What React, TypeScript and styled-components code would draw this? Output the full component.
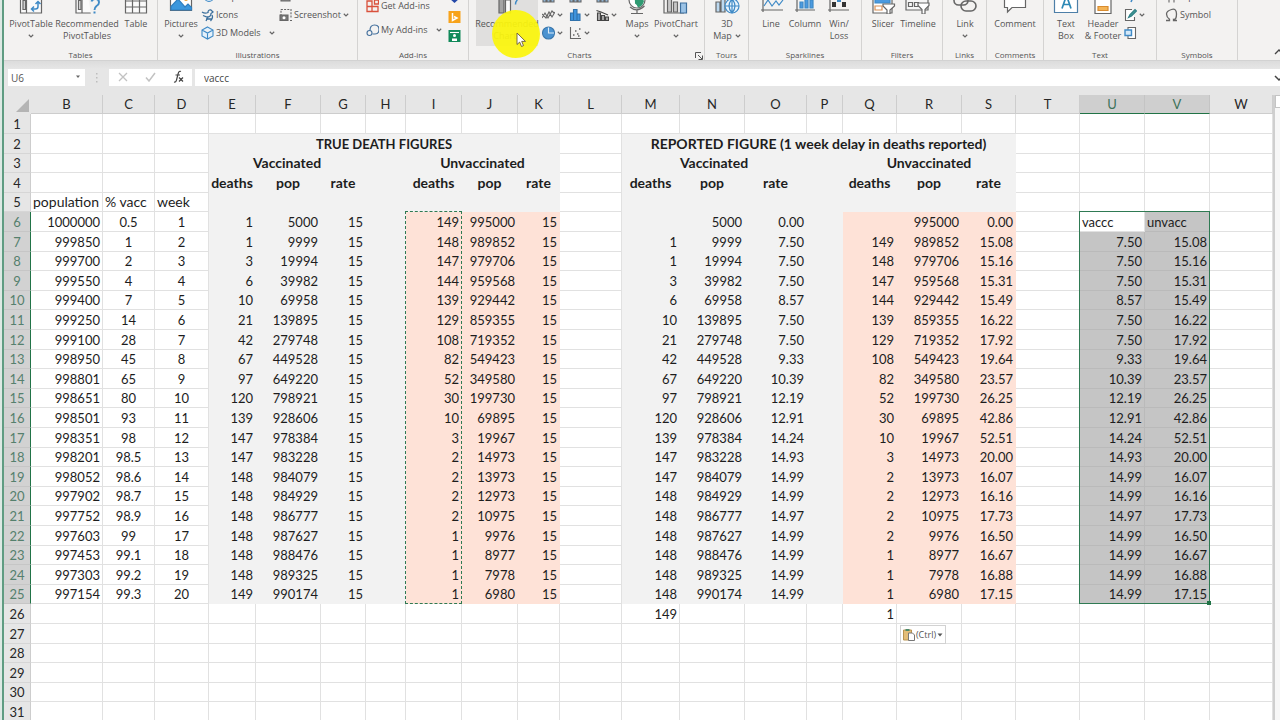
import React from "react";
import styled, { createGlobalStyle, css } from "styled-components";

const UI_FONT = '"Open Sans", "Noto Sans", sans-serif';
const CELL_FONT = 'Lato, "Open Sans", sans-serif';
const GREEN = "#217346";
const GRID = "#e1e1e1";

const GlobalStyle = createGlobalStyle`
  * { box-sizing: border-box; }
  body { margin: 0; background: #e6e6e6; }
  button, input { font: inherit; color: inherit; margin: 0; padding: 0; border: 0; background: none; }
`;

const Window = styled.div`
  height: 100vh;
  overflow: hidden;
  display: flex;
  flex-direction: column;
  background: #e6e6e6;
  border-left: 2px solid #dde9e4;
  font-family: ${UI_FONT};
  font-size: 10px;
  line-height: 12px;
  color: #555;
`;

const Frame = styled.div`
  flex: 1;
  min-height: 0;
  display: flex;
  flex-direction: column;
  border-left: 2px solid #5f9c82;
`;

/* ---------- ribbon ---------- */

const Ribbon = styled.header`
  position: relative;
  flex: none;
  height: 61px;
  display: flex;
  align-items: flex-end;
  overflow: hidden;
  background: #f3f2f1;
  border-bottom: 1px solid #d2d2d2;
  font-size: 9px;
`;

const Group = styled.section<{ $w: number }>`
  flex: none;
  width: ${(p) => p.$w}px;
  height: 84px;
  display: flex;
  flex-direction: column;
  border-right: 1px solid #d4d3d2;
`;

const GroupBody = styled.div<{ $pad?: number }>`
  flex: 1;
  display: flex;
  align-items: flex-start;
  padding-left: ${(p) => p.$pad ?? 0}px;
`;

const GroupLabel = styled.div<{ $launcher?: boolean }>`
  position: relative;
  height: 12px;
  font-size: 8px;
  line-height: 14px;
  text-align: center;
  white-space: nowrap;
  padding-right: ${(p) => (p.$launcher ? 14 : 0)}px;
`;

const Launcher = styled.button`
  position: absolute;
  right: 1px;
  top: 2px;
  width: 8px;
  height: 8px;
  display: block;
`;

const BigButton = styled.button<{ $w: number; $active?: boolean }>`
  flex: none;
  width: ${(p) => p.$w}px;
  height: 70px;
  padding-top: 6px;
  display: flex;
  flex-direction: column;
  align-items: center;
  background: ${(p) => (p.$active ? "#e0dfde" : "transparent")};
  white-space: nowrap;
`;

const BigLabel = styled.span`
  margin-top: 4px;
  display: flex;
  flex-direction: column;
  align-items: center;
`;

const LabelLine = styled.span`
  height: 12px;
  display: flex;
  align-items: center;
  gap: 3px;
`;

const Stack = styled.div<{ $w: number; $top?: number; $row?: number }>`
  flex: none;
  width: ${(p) => p.$w}px;
  padding-top: ${(p) => p.$top ?? 12}px;
  display: grid;
  grid-auto-rows: ${(p) => p.$row ?? 18}px;
`;

const SmallButton = styled.button<{ $gap?: number }>`
  display: flex;
  align-items: center;
  gap: ${(p) => p.$gap ?? 2}px;
  white-space: nowrap;
  text-align: left;
`;

const Spacer = styled.span`
  width: 4px;
`;

const CollapseButton = styled.button`
  margin-left: auto;
  width: 8px;
  height: 14px;
  overflow: hidden;
`;

const Highlight = styled.div`
  position: absolute;
  left: 488px;
  top: 10px;
  width: 48px;
  height: 48px;
  border-radius: 50%;
  background: #fbf50c;
  opacity: 0.93;
`;

const Pointer = styled.svg`
  position: absolute;
  left: 512px;
  top: 32px;
`;

/* ---------- formula bar ---------- */

const FormulaBar = styled.div`
  flex: none;
  height: 25px;
  margin-bottom: 9px;
  padding: 8px 0 0 4px;
  display: flex;
  background: linear-gradient(#dcdcdc, #e6e6e6 8px);
`;

const NameBox = styled.div`
  width: 77px;
  display: flex;
  align-items: center;
  background: #fff;
  padding: 0 4px 0 3px;
`;

const NameInput = styled.input`
  flex: 1;
  min-width: 0;
  height: 17px;
  outline: none;
`;

const Dots = styled.div`
  width: 24px;
  display: flex;
  justify-content: center;
  align-items: center;
`;

const FormulaButtons = styled.div`
  width: 83px;
  display: flex;
  align-items: center;
  justify-content: space-around;
  background: #fff;
  margin-right: 3px;
`;

const FormulaField = styled.div`
  flex: 1;
  display: flex;
  align-items: center;
  background: #fff;
  padding-left: 9px;
  overflow: hidden;
`;

const FormulaInput = styled.input`
  flex: 1;
  height: 17px;
  outline: none;
  color: #444;
`;

/* ---------- sheet ---------- */

const SheetArea = styled.main`
  flex: 1;
  min-height: 0;
  display: flex;
  overflow: hidden;
`;

const Grid = styled.table`
  flex: 1;
  width: 100%;
  align-self: flex-start;
  table-layout: fixed;
  border-collapse: separate;
  border-spacing: 0;
  background: #fff;
  font-family: ${CELL_FONT};
  font-size: 13px;
  line-height: 18px;
  color: #1d1d1d;
`;

const Row = styled.tr`
  height: 20px;
  &:nth-child(5n + 3),
  &:nth-child(5n) {
    height: 19px;
  }
`;

const ColHead = styled.th<{ $on?: boolean }>`
  height: 19px;
  padding: 0;
  font-size: 13px;
  font-weight: 400;
  background: ${(p) => (p.$on ? "#cfcfcf" : "#e6e6e6")};
  color: ${(p) => (p.$on ? "#3d7259" : "#262626")};
  border-right: 1px solid ${(p) => (p.$on ? "#c4c4c4" : "#cdcdcd")};
  border-bottom: 1px solid ${(p) => (p.$on ? GREEN : "#cdcdcd")};
`;

const Corner = styled.th`
  padding: 0 1px 1px 0;
  background: #e6e6e6;
  text-align: right;
  vertical-align: bottom;
  line-height: 0;
`;

const RowHead = styled.th<{ $on?: boolean }>`
  padding: 0;
  font-size: 13px;
  font-weight: 400;
  background: ${(p) => (p.$on ? "#d2d2d2" : "#e6e6e6")};
  color: ${(p) => (p.$on ? "#55806d" : "#262626")};
  border-bottom: 1px solid ${(p) => (p.$on ? "#c6c6c6" : "#d6d6d6")};
  border-right: 1px solid ${(p) => (p.$on ? GREEN : "#cdcdcd")};
`;

type Fill = "none" | "grey" | "peach" | "selected";
const fills: Record<Fill, ReturnType<typeof css>> = {
  none: css`
    border-color: ${GRID};
  `,
  grey: css`
    background: #f2f2f2;
    border-color: #f2f2f2;
  `,
  peach: css`
    background: #fee2d7;
    border-color: #fee2d7;
  `,
  selected: css`
    background: #c5c5c5;
    border-color: #bababa;
  `,
};

const Cell = styled.td<{ $fill: Fill; $align: string; $bold?: boolean; $size?: number }>`
  position: relative;
  padding: 0 2px;
  border: 0 solid;
  border-width: 0 1px 1px 0;
  text-align: ${(p) => p.$align};
  font-weight: ${(p) => (p.$bold ? 700 : 400)};
  font-size: ${(p) => p.$size ?? 13}px;
  white-space: nowrap;
  ${(p) => fills[p.$fill]}
`;

const RangeOutline = styled.div<{ $w: number; $dashed?: boolean }>`
  position: absolute;
  z-index: 1;
  left: -1px;
  top: -1px;
  width: ${(p) => p.$w}px;
  height: 393px;
  border: 1px ${(p) => (p.$dashed ? "dashed" : "solid")} #2f7a53;
  pointer-events: none;
`;

const FillHandle = styled.i`
  position: absolute;
  right: -2px;
  bottom: -2px;
  width: 4px;
  height: 4px;
  background: ${GREEN};
`;

const PasteOptions = styled.button`
  position: absolute;
  z-index: 1;
  left: 3px;
  top: 1px;
  width: 46px;
  height: 19px;
  display: flex;
  align-items: center;
  justify-content: center;
  gap: 1px;
  border: 1px solid #d2d2d2;
  background: #fff;
  color: #555;
  font-family: ${UI_FONT};
  font-size: 9px;
  line-height: 12px;
`;

const ScrollBar = styled.div`
  flex: none;
  width: 7px;
  border-left: 2px solid #cfcfcf;
  background: #f7f7f7;
`;

const ScrollUp = styled.button`
  display: block;
  width: 5px;
  height: 13px;
  background: #fff;
  border: 1px solid #c4c4c4;
  border-right: 0;
`;

/* ---------- icons ---------- */

const Chevron = () => (
  <svg width="6" height="4" viewBox="0 0 6 4" fill="none" stroke="#666" strokeWidth="1.2">
    <path d="M.8.8 3 2.9 5.2.8" />
  </svg>
);

const Big = ({ children }: { children: React.ReactNode }) => (
  <svg width="32" height="32" viewBox="0 0 32 32" fill="none" stroke="#666" strokeWidth="1.2" aria-hidden="true">
    {children}
  </svg>
);

const Small = ({ children }: { children?: React.ReactNode }) => (
  <svg width="13" height="14" viewBox="0 0 13 14" fill="none" stroke="#666" strokeWidth="1.1" aria-hidden="true">
    {children}
  </svg>
);

const BLUE = "#3f8ac6";

const PivotTableIcon = () => (
  <Big>
    <path d="M5.500 4h21v27h-21zM5.500 10h21M11.500 10v21" fill="#fafafa" />
    <path d="M8 18.500h2.500v9H8z" fill="#ddd" />
    <path d="M17 27h3.500q2.500 0 2.500-2.500V20M19 24.500 16.500 27l2.500 2.500M20.500 22l2.500-2.500 2.500 2.500" stroke={BLUE} strokeWidth="1.500" />
  </Big>
);
const RecPivotIcon = () => (
  <Big>
    <path d="M5 4h20v27H5zM5 10h20M11 10v21" fill="#fafafa" />
    <path d="M7.500 18.500H10v9H7.500z" fill="#ddd" />
    <path d="M17 14h12v19h-9z" fill="#f3f2f1" stroke="none" />
    <path d="M20.500 19.500q1-2.500 4-2.500 3.500 0 3.500 3.500 0 2-2.500 3.500-2 1.500-2 4" stroke={BLUE} strokeWidth="1.900" />
    <path d="M22.500 30.500h2" stroke={BLUE} strokeWidth="2" />
  </Big>
);
const TableIcon = () => (
  <Big>
    <path d="M5.500 6h21v25h-21zM5.500 13h21M5.500 19h21M5.500 25h21M12.500 6v25M19.500 6v25" fill="#fafafa" />
  </Big>
);
const PicturesIcon = () => (
  <Big>
    <path d="M5.500 6h21v22.500h-21z" fill="#fff" />
    <path d="M6 24.500 13 17l7 8 3-3 3.500 3.500V28H6z" fill="#3b97dd" stroke="#2f7fc0" />
    <circle cx="21" cy="17" r="2" fill="#e8a33d" stroke="none" />
  </Big>
);
const RecChartIcon = () => (
  <Big>
    <path d="M14.500 18h5v13h-5z" fill="#fafafa" />
    <path d="M8 8h5v23H8z" fill="#a3a3a3" />
    <path d="M26 12q2 3-.5 7-1 1-1 3.500" stroke={BLUE} strokeWidth="1.500" />
  </Big>
);
const MapsIcon = () => (
  <Big>
    <circle cx="16" cy="18" r="8" fill="#fff" />
    <path d="M13 12q5 1 6 5 3 0 4 2-1 5-6 6.500-1-3-3-4 0-4-1-9.500z" fill="#2f9a72" stroke="none" />
    <path d="M9 25q7 6 14.500-1M16 28v3M10 31.500h12" />
  </Big>
);
const PivotChartIcon = () => (
  <Big>
    <path d="M4 6v25h20M4 16h3" />
    <path d="M7.500 12h4v18h-4zM13.500 20h4v10h-4z" fill="#c8c8c8" />
    <path d="M20.500 21h6v10h-6z" fill="#9bc3e6" stroke="#3c6f9e" />
  </Big>
);
const MapIcon = () => (
  <Big>
    <path d="M5 20h4v10H5zM10 14h4v16h-4z" fill="#bcd9f0" />
    <circle cx="21" cy="24" r="7" fill="#e8f3fb" stroke={BLUE} />
    <path d="M14 24h14M21 17v14M21 17q-6 7 0 14M21 17q6 7 0 14" stroke={BLUE} />
  </Big>
);
const LineIcon = () => (
  <Big>
    <path d="M8 6v24M6 28h22" />
    <path d="M9 24l4-6 4 6 4-5 3 4 4-5" stroke={BLUE} />
  </Big>
);
const ColumnIcon = () => (
  <Big>
    <path d="M8 6v24M6 28h20" />
    <path d="M11 20h3v6h-3zM16 15h3v11h-3zM21 18h3v8h-3z" fill="#4b9ae0" stroke={BLUE} />
  </Big>
);
const WinLossIcon = () => (
  <Big>
    <path d="M7 6v24M5 28h21" />
    <path d="M9 20h4v5H9zM19 20h4v5h-4z" fill="#333" stroke="none" />
    <path d="M14 15h4v5h-4z" fill="#3f8ac6" stroke="none" />
  </Big>
);
const SlicerIcon = () => (
  <Big>
    <path d="M6 6h19v25H6z" fill="#fff" />
    <path d="M8 17h15v4H8z" fill="#4b9ae0" stroke={BLUE} />
    <path d="M8 24h7v4H8z" stroke="#d99055" />
    <path d="M16 22h11.500v2L23 28v4h-3v-4l-4-4z" fill="#fff" />
  </Big>
);
const TimelineIcon = () => (
  <Big>
    <path d="M4 14h22v14H4zM6.500 20.500h4v4h-4zM12.500 20.500h4v4h-4z" fill="#f6f6f6" />
    <path d="M16 21h11v2.500l-4 4V32h-3v-4.500l-4-4z" fill="#fff" />
  </Big>
);
const LinkIcon = () => (
  <Big>
    <rect x="5" y="14" width="14" height="9" rx="4.500" strokeWidth="1.600" />
    <rect x="12" y="19" width="15" height="10" rx="5" strokeWidth="1.600" />
  </Big>
);
const CommentIcon = () => (
  <Big>
    <path d="M5.500 8h21v17.500H13L8.500 30v-4.500h-3z" fill="#fff" />
  </Big>
);
const TextBoxIcon = () => (
  <Big>
    <path d="M4.500 6h23v24.500h-23z" fill="#fff" stroke="#4d7fa8" />
    <path d="M12 26.500l4.500-13 4.500 13M13.500 22.500h6" stroke="#2b88b5" strokeWidth="1.700" />
  </Big>
);
const HeaderIcon = () => (
  <Big>
    <path d="M8 4h16v27.500H8z" fill="#fff" />
    <path d="M11 24.500h10v4H11z" fill="#f4b455" stroke="#d98c30" />
  </Big>
);

const ShapesIcon = () => (
  <Small>
    <circle cx="8" cy="7" r="4.500" fill="#cfe4f5" stroke={BLUE} />
  </Small>
);
const IconsIcon = () => (
  <Small>
    <path d="M1 4q3 2 6 .5Q7 1.500 10 2l2 2-2 1.500Q10 9 6 9L2 7.500M5 11h6M7 9l-2 4M11 7q1.500 3-1.500 6" stroke="#3b6f9c" strokeWidth="1.300" />
  </Small>
);
const ModelsIcon = () => (
  <Small>
    <path d="M6.500 1 12 4v6l-5.500 3L1 10V4zM1 4l5.500 3L12 4M6.500 7v6" fill="#e4f1fb" stroke={BLUE} />
  </Small>
);
const SmartArtIcon = () => (
  <Small>
    <path d="M2 8h9v3H2z" fill="#8b8b8b" />
  </Small>
);
const ScreenshotIcon = () => (
  <Small>
    <path d="M2 8V1.500h10V10" strokeDasharray="2 1.200" />
    <path d="M1 7h8v5.500H1z" fill="#777" />
    <circle cx="5" cy="9.800" r="1.500" fill="#fff" stroke="none" />
    <path d="M11 12.500h2" />
  </Small>
);
const StoreIcon = () => (
  <Small>
    <path d="M1 2h5v10.500H1zM6 7.500h6v5H6zM1 7.500h5M8.500 1h4v4h-4z" stroke="#d9513c" strokeWidth="1.300" />
  </Small>
);
const MyAddinsIcon = () => (
  <Small>
    <path d="M4 7.500Q4 2 8.500 2T13 6.500 9 11H6.500" stroke="#44709d" strokeWidth="1.200" />
    <circle cx="3.500" cy="10" r="2.500" stroke="#44709d" />
  </Small>
);
const VisioIcon = () => (
  <Small>
    <path d="M6.500 2 12 7l-5.500 5L1 7z" fill="#2348a8" stroke="none" />
  </Small>
);
const BingIcon = () => (
  <Small>
    <path d="M.5 1h12v12H.5z" fill="#f7a31b" stroke="none" />
    <path d="M4.500 3v7.500L9 8 6 6.500" stroke="#fff" strokeWidth="1.500" />
  </Small>
);
const PeopleIcon = () => (
  <Small>
    <path d="M.5 1h12v12H.5z" fill="#128a5a" stroke="none" />
    <path d="M2 3.500h9" stroke="#fff" />
    <circle cx="6.500" cy="6.500" r="1.500" fill="#fff" stroke="none" />
    <path d="M4 12V9.500h5V12" fill="#fff" stroke="none" />
  </Small>
);
const BarSmall = () => (
  <Small>
    <path d="M1 4h3v8H1zM5 7h3v5H5zM9 5h3v7H9z" fill="#8fb4d4" />
  </Small>
);
const LineSmall = () => (
  <Small>
    <path d="M0 10 3 5l3 5 4-7 2 2M0 6l4 4 3-6 3 5 3-5" />
  </Small>
);
const PieSmall = () => (
  <Small>
    <circle cx="6.500" cy="7" r="6" fill="#4b93d1" stroke="#3a77ad" />
    <path d="M6.500 1.500V7h5.500" stroke="#dcecf8" />
  </Small>
);
const HistSmall = () => (
  <Small>
    <path d="M1.500 5h3v7.500h-3zM4.500 1.500h3.500v11H4.500zM8 6h3v6.500H8z" fill="#3f94dd" stroke="#2f71ab" />
  </Small>
);
const ScatterSmall = () => (
  <Small>
    <path d="M1.500 1v11.500H12" />
    <path d="M4 9h1.500M6 5h1.500M8 8h1.500M10 3h1.500M9 10h1.500" strokeWidth="1.500" />
  </Small>
);
const ComboSmall = () => (
  <Small>
    <path d="M1.500 5h3v7.500h-3zM5.500 7.500h3v5h-3zM9.500 9h3v3.500h-3z" fill="#aaa" stroke="#444" />
    <path d="M.5 2.500 5 4l7 3" stroke="#444" />
  </Small>
);
const SignatureSmall = () => (
  <Small>
    <path d="M8 1.500H1.500v11h9V9" fill="#fff" />
    <path d="M4.500 9.500 6 6.500l5-5 1.500 1.500-5 5z" fill="#3f9c93" stroke="#2f7f86" />
  </Small>
);
const ObjectSmall = () => (
  <Small>
    <path d="M4 1.500h7.500v11H4z" fill="#fff" />
    <path d="M1 4h6.500v5.500H1z" fill="#d4e8f8" stroke={BLUE} strokeWidth="1.400" />
  </Small>
);
const WordArtSmall = () => (
  <Small>
    <path d="M7 12l3-7" stroke={BLUE} strokeWidth="1.500" />
  </Small>
);
const PiSmall = () => (
  <Small>
    <path d="M1 4.500h11M4 4.500v8M9 4.500v8" />
  </Small>
);
const OmegaSmall = () => (
  <Small>
    <path d="M1 12.500h3.500v-1.200Q1.500 9 1.500 6T6.500 1.500 11.500 6t-3 5.300v1.200H12" strokeWidth="1.300" />
  </Small>
);

/* ---------- ribbon building blocks ---------- */

type BigProps = { w: number; icon: React.ReactNode; lines: string[]; drop?: "below" | "inline"; active?: boolean };

const RibbonButton = ({ w, icon, lines, drop, active }: BigProps) => (
  <BigButton type="button" $w={w} $active={active}>
    {icon}
    <BigLabel>
      {lines.map((line, i) => (
        <LabelLine key={line}>
          {line}
          {drop === "inline" && i === lines.length - 1 && <Chevron />}
        </LabelLine>
      ))}
      {drop === "below" && (
        <LabelLine>
          <Chevron />
        </LabelLine>
      )}
    </BigLabel>
  </BigButton>
);

type SmallProps = { icon: React.ReactNode; text?: string; drop?: boolean; wide?: boolean; label?: string };

const SmallItem = ({ icon, text, drop, wide, label }: SmallProps) => (
  <SmallButton type="button" aria-label={label}>
    {icon}
    {text}
    {wide && <Spacer />}
    {drop && <Chevron />}
  </SmallButton>
);

const RibbonBar = () => (
  <Ribbon>
    <Group $w={154}>
      <GroupBody $pad={2}>
        <RibbonButton w={50} icon={<PivotTableIcon />} lines={["PivotTable"]} drop="below" />
        <RibbonButton w={62} icon={<RecPivotIcon />} lines={["Recommended", "PivotTables"]} />
        <RibbonButton w={36} icon={<TableIcon />} lines={["Table"]} />
      </GroupBody>
      <GroupLabel>Tables</GroupLabel>
    </Group>
    <Group $w={200}>
      <GroupBody $pad={3}>
        <RibbonButton w={40} icon={<PicturesIcon />} lines={["Pictures"]} drop="below" />
        <Stack $w={78}>
          <SmallItem icon={<ShapesIcon />} text="Shapes" drop />
          <SmallItem icon={<IconsIcon />} text="Icons" />
          <SmallItem icon={<ModelsIcon />} text="3D Models" drop wide />
        </Stack>
        <Stack $w={76}>
          <SmallItem icon={<SmartArtIcon />} text="SmartArt" />
          <SmallItem icon={<ScreenshotIcon />} text="Screenshot" drop />
        </Stack>
      </GroupBody>
      <GroupLabel>Illustrations</GroupLabel>
    </Group>
    <Group $w={111}>
      <GroupBody $pad={8}>
        <Stack $w={82} $top={18} $row={24}>
          <SmallItem icon={<StoreIcon />} text="Get Add-ins" />
          <SmallItem icon={<MyAddinsIcon />} text="My Add-ins" drop wide />
        </Stack>
        <Stack $w={13} $top={12} $row={19}>
          <SmallItem icon={<VisioIcon />} label="Visio" />
          <SmallItem icon={<BingIcon />} label="Bing Maps" />
          <SmallItem icon={<PeopleIcon />} label="People Graph" />
        </Stack>
      </GroupBody>
      <GroupLabel>Add-ins</GroupLabel>
    </Group>
    <Group $w={236}>
      <GroupBody $pad={7}>
        <RibbonButton w={62} icon={<RecChartIcon />} lines={["Recommended", "Charts"]} active />
        <Spacer />
        <Stack $w={27}>
          <SmallItem icon={<BarSmall />} drop label="Column chart" />
          <SmallItem icon={<LineSmall />} drop label="Line chart" />
          <SmallItem icon={<PieSmall />} drop label="Pie chart" />
        </Stack>
        <Stack $w={27}>
          <SmallItem icon={<BarSmall />} drop label="Hierarchy chart" />
          <SmallItem icon={<HistSmall />} drop label="Statistic chart" />
          <SmallItem icon={<ScatterSmall />} drop label="Scatter chart" />
        </Stack>
        <Stack $w={24}>
          <SmallItem icon={<BarSmall />} drop label="Waterfall chart" />
          <SmallItem icon={<ComboSmall />} drop label="Combo chart" />
        </Stack>
        <RibbonButton w={34} icon={<MapsIcon />} lines={["Maps"]} drop="below" />
        <RibbonButton w={44} icon={<PivotChartIcon />} lines={["PivotChart"]} drop="below" />
      </GroupBody>
      <GroupLabel $launcher>
        Charts
        <Launcher type="button" aria-label="Chart options">
          <svg width="8" height="8" viewBox="0 0 8 8" fill="none" stroke="#555">
            <path d="M.5 6V.5H6M3 3l4 4M7.500 3.500v4h-4" />
          </svg>
        </Launcher>
      </GroupLabel>
    </Group>
    <Group $w={44}>
      <GroupBody>
        <RibbonButton w={44} icon={<MapIcon />} lines={["3D", "Map"]} drop="inline" />
      </GroupBody>
      <GroupLabel>Tours</GroupLabel>
    </Group>
    <Group $w={113}>
      <GroupBody $pad={6}>
        <RibbonButton w={32} icon={<LineIcon />} lines={["Line"]} />
        <RibbonButton w={36} icon={<ColumnIcon />} lines={["Column"]} />
        <RibbonButton w={32} icon={<WinLossIcon />} lines={["Win/", "Loss"]} />
      </GroupBody>
      <GroupLabel>Sparklines</GroupLabel>
    </Group>
    <Group $w={81}>
      <GroupBody $pad={4}>
        <RibbonButton w={34} icon={<SlicerIcon />} lines={["Slicer"]} />
        <RibbonButton w={36} icon={<TimelineIcon />} lines={["Timeline"]} />
      </GroupBody>
      <GroupLabel>Filters</GroupLabel>
    </Group>
    <Group $w={44}>
      <GroupBody>
        <RibbonButton w={44} icon={<LinkIcon />} lines={["Link"]} drop="below" />
      </GroupBody>
      <GroupLabel>Links</GroupLabel>
    </Group>
    <Group $w={57}>
      <GroupBody>
        <RibbonButton w={56} icon={<CommentIcon />} lines={["Comment"]} />
      </GroupBody>
      <GroupLabel>Comments</GroupLabel>
    </Group>
    <Group $w={113}>
      <GroupBody $pad={6}>
        <RibbonButton w={32} icon={<TextBoxIcon />} lines={["Text", "Box"]} />
        <RibbonButton w={42} icon={<HeaderIcon />} lines={["Header", "& Footer"]} />
        <Stack $w={26}>
          <SmallItem icon={<WordArtSmall />} label="WordArt" />
          <SmallItem icon={<SignatureSmall />} drop label="Signature line" />
          <SmallItem icon={<ObjectSmall />} label="Object" />
        </Stack>
      </GroupBody>
      <GroupLabel>Text</GroupLabel>
    </Group>
    <Group $w={81}>
      <GroupBody $pad={8}>
        <Stack $w={68}>
          <SmallItem icon={<PiSmall />} text="Equation" />
          <SmallItem icon={<OmegaSmall />} text="Symbol" />
        </Stack>
      </GroupBody>
      <GroupLabel>Symbols</GroupLabel>
    </Group>
    <CollapseButton type="button" aria-label="Collapse the ribbon">
      <svg width="10" height="8" viewBox="0 0 10 8" fill="none" stroke="#444" strokeWidth="1.300">
        <path d="M3 6l4-4 4 4" />
      </svg>
    </CollapseButton>
    <Highlight />
    <Pointer width="11" height="16" viewBox="0 0 11 16">
      <path d="M1 1v11.500l2.700-2.400L5.500 14.500l2-.9-1.800-4.200H9.500z" fill="#fff" stroke="#6b5b3a" strokeWidth=".9" />
    </Pointer>
  </Ribbon>
);

const FormulaRow = () => (
  <FormulaBar>
    <NameBox>
      <NameInput aria-label="Name box" defaultValue="U6" />
      <button type="button" aria-label="Named ranges">
        <svg width="6" height="17" viewBox="0 0 6 17">
          <path d="M1 7.500h4L3 10z" fill="#666" />
        </svg>
      </button>
    </NameBox>
    <Dots>
      <svg width="2" height="12" viewBox="0 0 2 12" fill="#bdbdbd">
        <path d="M0 1h1.500v1.500H0zM0 5h1.500v1.500H0zM0 9h1.500v1.500H0z" />
      </svg>
    </Dots>
    <FormulaButtons>
      <button type="button" aria-label="Cancel">
        <svg width="10" height="10" viewBox="0 0 10 10" stroke="#c2c2c2" strokeWidth="1.300">
          <path d="M1 1l8 8M9 1 1 9" />
        </svg>
      </button>
      <button type="button" aria-label="Enter">
        <svg width="11" height="10" viewBox="0 0 11 10" fill="none" stroke="#c2c2c2" strokeWidth="1.500">
          <path d="M1 5.500 4 9l6-8" />
        </svg>
      </button>
      <button type="button" aria-label="Insert function">
        <svg width="11" height="13" viewBox="0 0 11 13" fill="none" stroke="#444" strokeWidth="1.200">
          <path d="M8 1.500Q6 .5 5.200 3.500L3.500 10Q3 12.500 1 12M2.500 5h4.500M6 7.500l4 4M10 7.500l-4 4" />
        </svg>
      </button>
    </FormulaButtons>
    <FormulaField>
      <FormulaInput aria-label="Formula bar" defaultValue="vaccc" />
      <svg width="6" height="8" viewBox="0 0 6 8" fill="none" stroke="#444" strokeWidth="1.500">
        <path d="M1 2l4 4 4-4" />
      </svg>
    </FormulaField>
  </FormulaBar>
);

/* ---------- sheet data ---------- */

const columns: [string, number | null][] = [
  ["B", 72], ["C", 52], ["D", 54], ["E", 47], ["F", 65], ["G", 45], ["H", 40], ["I", 56],
  ["J", 56], ["K", 42], ["L", 62], ["M", 58], ["N", 65], ["O", 62], ["P", 36], ["Q", 54],
  ["R", 65], ["S", 54], ["T", 64], ["U", 65], ["V", 65], ["W", null],
];
const letters = columns.map(([letter]) => letter);

// population, % vaccinated, true vaccinated deaths and pop, true unvaccinated deaths and pop,
// then the reported rates of the vaccinated and the unvaccinated
const weeks: [number, number, number, number, number, number, string, string][] = [
  [1000000, 0.5, 1, 5000, 149, 995000, "0.00", "0.00"],
  [999850, 1, 1, 9999, 148, 989852, "7.50", "15.08"],
  [999700, 2, 3, 19994, 147, 979706, "7.50", "15.16"],
  [999550, 4, 6, 39982, 144, 959568, "7.50", "15.31"],
  [999400, 7, 10, 69958, 139, 929442, "8.57", "15.49"],
  [999250, 14, 21, 139895, 129, 859355, "7.50", "16.22"],
  [999100, 28, 42, 279748, 108, 719352, "7.50", "17.92"],
  [998950, 45, 67, 449528, 82, 549423, "9.33", "19.64"],
  [998801, 65, 97, 649220, 52, 349580, "10.39", "23.57"],
  [998651, 80, 120, 798921, 30, 199730, "12.19", "26.25"],
  [998501, 93, 139, 928606, 10, 69895, "12.91", "42.86"],
  [998351, 98, 147, 978384, 3, 19967, "14.24", "52.51"],
  [998201, 98.5, 147, 983228, 2, 14973, "14.93", "20.00"],
  [998052, 98.6, 148, 984079, 2, 13973, "14.99", "16.07"],
  [997902, 98.7, 148, 984929, 2, 12973, "14.99", "16.16"],
  [997752, 98.9, 148, 986777, 2, 10975, "14.97", "17.73"],
  [997603, 99, 148, 987627, 1, 9976, "14.99", "16.50"],
  [997453, 99.1, 148, 988476, 1, 8977, "14.99", "16.67"],
  [997303, 99.2, 148, 989325, 1, 7978, "14.99", "16.88"],
  [997154, 99.3, 149, 990174, 1, 6980, "14.99", "17.15"],
];

type Entry = { v: string | number; span?: number; align?: string; bold?: boolean; size?: number };
const sheet: Record<string, Entry> = {};

const head = (ref: string, v: string, span?: number, size = 14) => {
  sheet[ref] = { v, span, align: "center", bold: true, size };
};
head("E2", "TRUE DEATH FIGURES", 7, 13);
head("M2", "REPORTED FIGURE (1 week delay in deaths reported)", 7);
head("E3", "Vaccinated", 3);
head("I3", "Unvaccinated", 3);
head("M3", "Vaccinated", 3);
head("Q3", "Unvaccinated", 3);
["E", "I", "M", "Q"].forEach((c) => {
  const i = letters.indexOf(c);
  head(c + 4, "deaths");
  head(letters[i + 1] + 4, "pop");
  head(letters[i + 2] + 4, "rate");
});
sheet.B5 = { v: "population", align: "left", size: 14 };
sheet.C5 = { v: "% vacc", align: "left", size: 14 };
sheet.D5 = { v: "week", align: "left", size: 14 };
weeks.forEach(([population, pct, vDeaths, vPop, uDeaths, uPop, vRate, uRate], i) => {
  const r = 6 + i;
  const put = (c: string, v: string | number, align = "right") => {
    sheet[c + r] = { v, align };
  };
  put("B", population);
  put("C", pct, "center");
  put("D", i + 1, "center");
  put("E", vDeaths);
  put("F", vPop);
  put("G", 15);
  put("I", uDeaths);
  put("J", uPop);
  put("K", 15);
  if (i > 0) {
    put("M", weeks[i - 1][2]);
    put("Q", weeks[i - 1][4]);
    put("U", vRate);
    put("V", uRate);
  }
  put("N", vPop);
  put("O", vRate);
  put("R", uPop);
  put("S", uRate);
});
sheet.U6 = { v: "vaccc", align: "left" };
sheet.V6 = { v: "unvacc", align: "left" };
sheet.M26 = { v: 149 };
sheet.Q26 = { v: 1 };

const fillOf = (c: string, r: number): Fill => {
  if (r < 2 || r > 25) return "none";
  if (c === "U" || c === "V") return r >= 6 && !(c === "U" && r === 6) ? "selected" : "none";
  if (r >= 6 && "IJKQRS".includes(c)) return "peach";
  return "EFGHIJKMNOPQRS".includes(c) ? "grey" : "none";
};

const SheetRow = ({ r }: { r: number }) => {
  const cells: React.ReactNode[] = [];
  for (let i = 0; i < letters.length; i++) {
    const c = letters[i];
    const entry = sheet[c + r];
    cells.push(
      <Cell
        key={c}
        colSpan={entry?.span}
        $fill={fillOf(c, r)}
        $align={entry?.align ?? "right"}
        $bold={entry?.bold}
        $size={entry?.size}
      >
        {entry?.v}
        {c + r === "I6" && <RangeOutline $w={57} $dashed />}
        {c + r === "U6" && (
          <RangeOutline $w={131}>
            <FillHandle />
          </RangeOutline>
        )}
        {c + r === "R27" && (
          <PasteOptions type="button">
            <svg width="12" height="13" viewBox="0 0 12 13" fill="none" aria-hidden="true">
              <path d="M.5 2h8v10h-8z" fill="#e3bd78" stroke="#b99350" />
              <path d="M2.500 1h4v2h-4z" fill="#4c8a6a" />
              <path d="M5.500 5h4l2 2v5.500h-6z" fill="#fff" stroke="#777" />
            </svg>
            (Ctrl)
            <svg width="6" height="4" viewBox="0 0 6 4" aria-hidden="true">
              <path d="M.5.5h5L3 3.500z" fill="#555" />
            </svg>
          </PasteOptions>
        )}
      </Cell>
    );
    if (entry?.span) i += entry.span - 1;
  }
  return (
    <Row>
      <RowHead scope="row" $on={r >= 6 && r <= 25}>
        {r}
      </RowHead>
      {cells}
    </Row>
  );
};

const rowNumbers = Array.from({ length: 31 }, (_, i) => i + 1);

export default function App() {
  return (
    <Window>
      <GlobalStyle />
      <Frame>
        <RibbonBar />
        <FormulaRow />
        <SheetArea>
          <Grid>
            <colgroup>
              <col width={27} />
              {columns.map(([letter, w]) => (
                <col key={letter} width={w ?? undefined} />
              ))}
            </colgroup>
            <thead>
              <tr>
                <Corner aria-label="Select all">
                  <svg width="15" height="15" viewBox="0 0 15 15" aria-hidden="true">
                    <path d="M14 1v13H1z" fill="#b4b4b4" />
                  </svg>
                </Corner>
                {letters.map((c) => (
                  <ColHead key={c} scope="col" $on={c === "U" || c === "V"}>
                    {c}
                  </ColHead>
                ))}
              </tr>
            </thead>
            <tbody>
              {rowNumbers.map((r) => (
                <SheetRow key={r} r={r} />
              ))}
            </tbody>
          </Grid>
          <ScrollBar>
            <ScrollUp type="button" aria-label="Scroll up" />
          </ScrollBar>
        </SheetArea>
      </Frame>
    </Window>
  );
}
